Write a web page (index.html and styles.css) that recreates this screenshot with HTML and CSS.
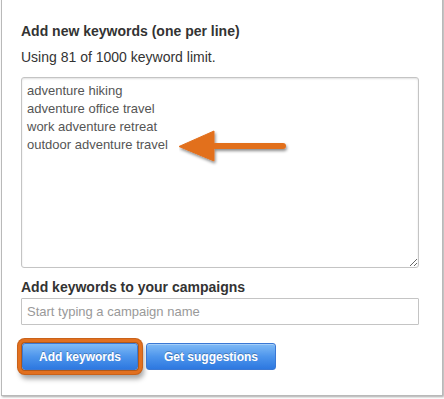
FILE: index.html
```html
<!DOCTYPE html>
<html>
<head>
<meta charset="utf-8">
<link rel="stylesheet" href="styles.css">
</head>
<body>
<div class="panel">
  <h2 class="title">Add new keywords (one per line)</h2>
  <p class="usage">Using 81 of 1000 keyword limit.</p>
  <textarea class="keywords">adventure hiking
adventure office travel
work adventure retreat
outdoor adventure travel</textarea>
  <h3 class="label">Add keywords to your campaigns</h3>
  <input class="campaign" type="text" placeholder="Start typing a campaign name">
  <div class="actions">
    <button class="btn btn-highlight">Add keywords</button>
    <button class="btn">Get suggestions</button>
  </div>
  <svg class="arrow" width="120" height="40" viewBox="0 0 120 40">
    <defs>
      <filter id="sh" x="-20%" y="-40%" width="140%" height="180%">
        <feDropShadow dx="1" dy="2" stdDeviation="1.5" flood-color="#000" flood-opacity="0.45"/>
      </filter>
    </defs>
    <g filter="url(#sh)" fill="#e2701f" stroke="#e2701f">
      <line x1="36" y1="17" x2="104" y2="17" stroke-width="6" stroke-linecap="round"/>
      <polygon points="0,17.5 35,2 35,32" stroke-width="1" stroke-linejoin="round"/>
    </g>
  </svg>
</div>
</body>
</html>
```

FILE: styles.css
```css
html, body {
  margin: 0;
  padding: 0;
  background: #fff;
}
body {
  width: 444px;
  height: 399px;
  overflow: hidden;
  font-family: "Liberation Sans", Arial, Helvetica, sans-serif;
}
.panel {
  position: relative;
  box-sizing: border-box;
  margin: -4px 0 0 1px;
  width: 442px;
  height: 400px;
  padding: 25px 22px 0 19px;
  background: #fff;
  border: 1px solid #b9b9b9;
  border-top: none;
  box-shadow: 1px 1px 2px rgba(0,0,0,0.35);
  display: flex;
  flex-direction: column;
  align-items: flex-start;
}
.title {
  margin: 0;
  font-size: 14px;
  line-height: 20px;
  font-weight: bold;
  color: #333;
}
.usage {
  margin: 6px 0 0 0;
  font-size: 14px;
  line-height: 20px;
  color: #333;
}
.keywords {
  box-sizing: border-box;
  margin: 10px 0 0 0;
  width: 398px;
  height: 191px;
  padding: 4px 5px;
  border: 1px solid #c4c4c4;
  border-radius: 3px;
  box-shadow: inset 0 1px 2px rgba(0,0,0,0.12);
  font-family: "Liberation Sans", Arial, Helvetica, sans-serif;
  font-size: 13px;
  line-height: 18px;
  color: #555;
  resize: vertical;
  outline: none;
}
.label {
  margin: 9px 0 0 0;
  font-size: 14px;
  line-height: 20px;
  font-weight: bold;
  color: #333;
}
.campaign {
  box-sizing: border-box;
  margin: 1px 0 0 0;
  width: 398px;
  height: 27px;
  padding: 0 5px;
  border: 1px solid #c4c4c4;
  border-radius: 1px;
  font-family: "Liberation Sans", Arial, Helvetica, sans-serif;
  font-size: 13px;
  color: #555;
  outline: none;
}
.campaign::placeholder {
  color: #999;
}
.actions {
  display: flex;
  gap: 8px;
  margin: 18px 0 0 1px;
}
.btn {
  box-sizing: border-box;
  height: 27px;
  padding: 0 17px;
  border: 1px solid #3a78d4;
  border-radius: 3px;
  background: linear-gradient(to bottom, #80bbf6 0%, #4d95ec 50%, #2d78e0 100%);
  color: #fff;
  font-family: "Liberation Sans", Arial, Helvetica, sans-serif;
  font-size: 12px;
  font-weight: bold;
  text-shadow: 0 -1px 0 rgba(0,0,0,0.25);
  box-shadow: inset 0 1px 0 rgba(255,255,255,0.3);
  cursor: pointer;
}
.btn-highlight {
  width: 116px;
  padding: 0;
  box-shadow: 0 0 0 1px #b0591a, 0 0 0 4px #e2701f, 0 0 0 5px #c9621a, 2px 5px 5px 4px rgba(0,0,0,0.35);
}
.arrow {
  position: absolute;
  left: 177px;
  top: 133px;
}
```
